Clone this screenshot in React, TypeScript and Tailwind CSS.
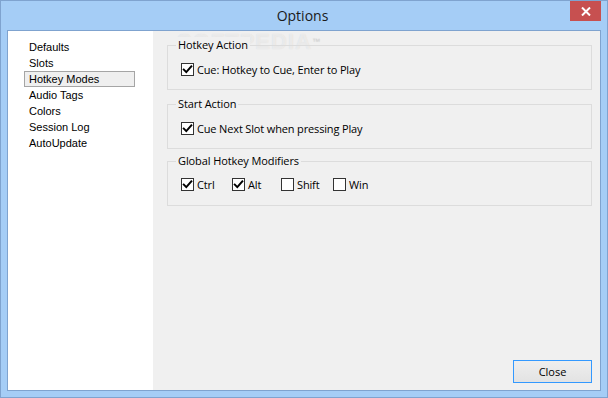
import React from "react";

const seg = { fontFamily: '"Open Sans", "Noto Sans", sans-serif' };
const arial = { fontFamily: '"Liberation Sans", Arial, sans-serif' };

function Check({ checked, label, className = "" }: { checked: boolean; label: string; className?: string }) {
  return (
    <div className={"flex items-center h-[13px] " + className}>
      <div className="w-[13px] h-[13px] border border-[#333333] bg-white flex items-center justify-center shrink-0">
        {checked && (
          <svg width="11" height="11" viewBox="0 0 11 11">
            <path d="M1.8 5.6 L4.3 8.1 L9.3 2.4" fill="none" stroke="#000" strokeWidth="2" strokeLinecap="square" />
          </svg>
        )}
      </div>
      <span className="ml-[3px] leading-[13px] text-black whitespace-nowrap text-[11px] tracking-[-0.15px]">{label}</span>
    </div>
  );
}

function Group({ title, children, className = "", pt = "pt-[17px]" }: { title: string; children: React.ReactNode; className?: string; pt?: string }) {
  return (
    <div className={"relative border border-[#dcdcdc] h-[45px] pl-[13px] " + pt + " " + className}>
      <span className="absolute left-[8px] top-[-9px] px-[2px] bg-[#f0f0f0] text-[11px] leading-[16px] text-black tracking-[-0.1px]">
        {title}
      </span>
      {children}
    </div>
  );
}

export default function App() {
  const items = ["Defaults", "Slots", "Hotkey Modes", "Audio Tags", "Colors", "Session Log", "AutoUpdate"];
  return (
    <div className="w-[608px] h-[398px] bg-[#a5cdf6] border border-[#7fa3cf] flex flex-col" style={seg}>
      <div className="h-[29px] grid grid-cols-[1fr_auto_1fr] items-center pr-[6px]">
        <div />
        <div className="text-[14px] leading-[20px] text-[#1a1a1a] ml-[3px]">Options</div>
        <div className="self-start justify-self-end w-[31px] h-[20px] bg-[#c75050] flex items-center justify-center">
          <svg width="10" height="9" viewBox="0 0 10 9">
            <path d="M1 0.5 L9 8.5 M9 0.5 L1 8.5" stroke="#fff" strokeWidth="2" />
          </svg>
        </div>
      </div>
      <div className="mx-[6px] h-[361px] border border-[#7fa3cf] flex">
        <div className="w-[145px] bg-white pt-[8px] pl-[16px]" style={arial}>
          {items.map((it) => (
            <div
              key={it}
              className={
                "w-[111px] h-[16px] pl-[4px] text-[11px] leading-[14px] text-black border " +
                (it === "Hotkey Modes" ? "border-[#a5a5a5] bg-[#efefef]" : "border-transparent")
              }
            >
              {it}
            </div>
          ))}
        </div>
        <div className="relative flex-1 bg-[#f0f0f0] flex flex-col pl-[14px] pr-[8px] pt-[14px] pb-[7px]">
          <div
            className="absolute left-[24px] top-[-1px] text-[22px] leading-[24px] font-bold tracking-[1px] text-white/50 [text-shadow:0_0_1px_#d4d4d4] pointer-events-none"
            style={{ fontFamily: '"Liberation Sans", Arial, sans-serif' }}
          >
            SOFTPEDIA<span className="text-[8px] align-top text-[#d4d4d4] font-normal">™</span>
          </div>
          <Group title="Hotkey Action" pt="pt-[17px]">
            <Check checked label="Cue: Hotkey to Cue, Enter to Play" />
          </Group>
          <Group title="Start Action" className="mt-[14px]">
            <Check checked label="Cue Next Slot when pressing Play" />
          </Group>
          <Group title="Global Hotkey Modifiers" className="mt-[12px]" pt="pt-[16px]">
            <div className="flex">
              <Check checked label="Ctrl" className="w-[51px]" />
              <Check checked label="Alt" className="w-[49px]" />
              <Check checked={false} label="Shift" className="w-[52px]" />
              <Check checked={false} label="Win" />
            </div>
          </Group>
          <button className="mt-auto self-end w-[79px] h-[23px] border border-[#3399ff] bg-gradient-to-b from-[#eeeeee] to-[#e3e3e3] text-[11px] leading-[20px] text-black">
            Close
          </button>
        </div>
      </div>
    </div>
  );
}
